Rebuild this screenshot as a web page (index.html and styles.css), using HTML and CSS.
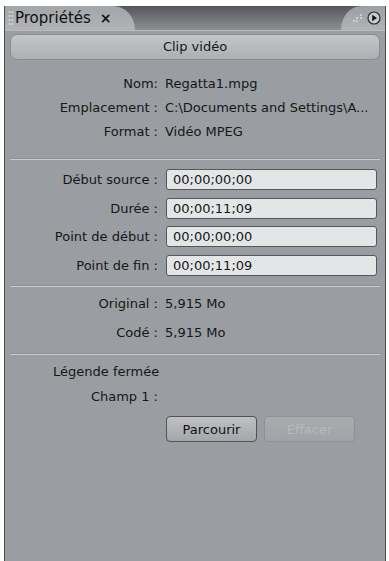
FILE: index.html
```html
<!DOCTYPE html>
<html lang="fr">
<head>
    <meta charset="UTF-8">
    <title>Propriétés</title>
    <link rel="stylesheet" href="styles.css">
</head>
<body>
<div class="panel">
    <div class="tabbar">
        <div class="tab">
            <svg class="grip" width="6" height="16" viewBox="0 0 6 16">
                <circle cx="1.5" cy="2" r="1" fill="#d8dadc"/>
                <circle cx="4.5" cy="2" r="1" fill="#d8dadc"/>
                <circle cx="1.5" cy="6" r="1" fill="#d8dadc"/>
                <circle cx="4.5" cy="6" r="1" fill="#d8dadc"/>
                <circle cx="1.5" cy="10" r="1" fill="#d8dadc"/>
                <circle cx="4.5" cy="10" r="1" fill="#d8dadc"/>
                <circle cx="1.5" cy="14" r="1" fill="#d8dadc"/>
                <circle cx="4.5" cy="14" r="1" fill="#d8dadc"/>
            </svg>
            <span class="tab-title">Propriétés</span>
            <span class="tab-close">×</span>
        </div>
        <div class="corner">
            <svg class="corner-dots" width="12" height="10" viewBox="0 0 12 10">
                <circle cx="9" cy="2" r="1" fill="#d8dadc"/>
                <circle cx="5" cy="5" r="1" fill="#d8dadc"/>
                <circle cx="9" cy="5" r="1" fill="#d8dadc"/>
                <circle cx="2" cy="8" r="1" fill="#d8dadc"/>
                <circle cx="5" cy="8" r="1" fill="#d8dadc"/>
            </svg>
            <svg class="menu-btn" width="14" height="14" viewBox="0 0 14 14">
                <circle cx="7" cy="7" r="6" fill="#c9cbcd" stroke="#2b2c2e" stroke-width="1.2"/>
                <path d="M5.2 3.8 L10 7 L5.2 10.2 Z" fill="#111"/>
            </svg>
        </div>
    </div>

    <div class="title-bar">Clip vidéo</div>

    <div class="info">
        <div class="label">Nom:</div><div class="value">Regatta1.mpg</div>
        <div class="label">Emplacement :</div><div class="value">C:\Documents and Settings\A...</div>
        <div class="label">Format :</div><div class="value">Vidéo MPEG</div>
    </div>

    <div class="sep"></div>

    <div class="fields">
        <div class="label">Début source :</div><div class="field">00;00;00;00</div>
        <div class="label">Durée :</div><div class="field">00;00;11;09</div>
        <div class="label">Point de début :</div><div class="field">00;00;00;00</div>
        <div class="label">Point de fin :</div><div class="field">00;00;11;09</div>
    </div>

    <div class="sep sep-fields"></div>

    <div class="sizes">
        <div class="label">Original :</div><div class="value">5,915 Mo</div>
        <div class="label">Codé :</div><div class="value">5,915 Mo</div>
    </div>

    <div class="sep sep-sizes"></div>

    <div class="caption">Légende fermée</div>
    <div class="sizes champ">
        <div class="label">Champ 1 :</div><div class="value"></div>
    </div>
    <div class="buttons">
        <button class="btn">Parcourir</button>
        <button class="btn disabled">Effacer</button>
    </div>
</div>
</body>
</html>
```

FILE: styles.css
```css
body{
    margin: 0;
    background: #fff;
    font-family: "DejaVu Sans", sans-serif;
    font-size: 13px;
    color: #161718;
}
.panel{
    margin: 6px 0 0 4px;
    width: 380px;
    height: 555px;
    border-left: 1px solid #4b4d50;
    border-right: 1px solid #4b4d50;
    background: #9a9da1;
}
.tabbar{
    height: 24px;
    display: flex;
    justify-content: space-between;
    background: linear-gradient(#55575a, #8d9093);
    border-bottom: 1px solid #b9bbbe;
}
.tab{
    width: 130px;
    display: flex;
    align-items: center;
    background: linear-gradient(#a3a6a9, #b1b3b6);
    border-top-right-radius: 24px 26px;
}
.grip{
    margin: 0 1px 0 3px;
}
.tab-title{
    font-size: 15px;
    color: #101112;
}
.tab-close{
    margin-left: 9px;
    font-weight: bold;
    font-size: 14px;
}
.corner{
    width: 40px;
    display: flex;
    align-items: center;
    justify-content: flex-end;
    gap: 3px;
    padding-right: 4px;
    background: linear-gradient(#9c9fa2, #b1b3b6);
    border-top-left-radius: 22px 26px;
}
.title-bar{
    margin: 3px 5px 0 5px;
    height: 26px;
    line-height: 24px;
    text-align: center;
    border-radius: 7px;
    background: linear-gradient(#c3c5c7, #adb0b3);
    border: 1px solid #8a8d90;
    box-sizing: border-box;
}
.info, .sizes, .fields{
    display: grid;
    grid-template-columns: 153px 1fr;
    column-gap: 7px;
    align-items: center;
}
.info{
    margin-top: 15px;
    row-gap: 6px;
}
.info .label, .info .value, .sizes .label, .sizes .value{
    height: 18px;
    line-height: 18px;
    white-space: nowrap;
}
.label{
    text-align: right;
}
.sep{
    margin: 17px 5px 0 5px;
    height: 1px;
    background: #c9cbcd;
    border-top: 1px solid #8d9094;
}
.fields{
    margin-top: 9px;
    row-gap: 7.5px;
    padding-right: 8px;
}
.field{
    height: 21px;
    line-height: 19px;
    margin-left: 1px;
    padding-left: 6px;
    box-sizing: border-box;
    background: #e4e5e6;
    border: 1px solid #55575a;
    border-radius: 3px;
}
.sep-fields{
    margin-top: 9.5px;
}
.sizes{
    margin-top: 8px;
    row-gap: 11px;
}
.sep-sizes{
    margin-top: 11px;
}
.caption{
    margin: 8px 0 0 48px;
    height: 18px;
    line-height: 18px;
}
.champ{
    margin-top: 7px;
}
.buttons{
    margin: 10px 0 0 161px;
    display: flex;
    gap: 7px;
}
.btn{
    width: 91px;
    height: 26px;
    font-family: "DejaVu Sans", sans-serif;
    font-size: 13px;
    color: #111;
    background: linear-gradient(#bfc1c4, #a3a6a9);
    border: 1px solid #505255;
    border-radius: 4px;
}
.btn.disabled{
    color: #b6b8bb;
    background: linear-gradient(#a9acaf, #a1a4a7);
    border-color: #8e9195;
}
```
